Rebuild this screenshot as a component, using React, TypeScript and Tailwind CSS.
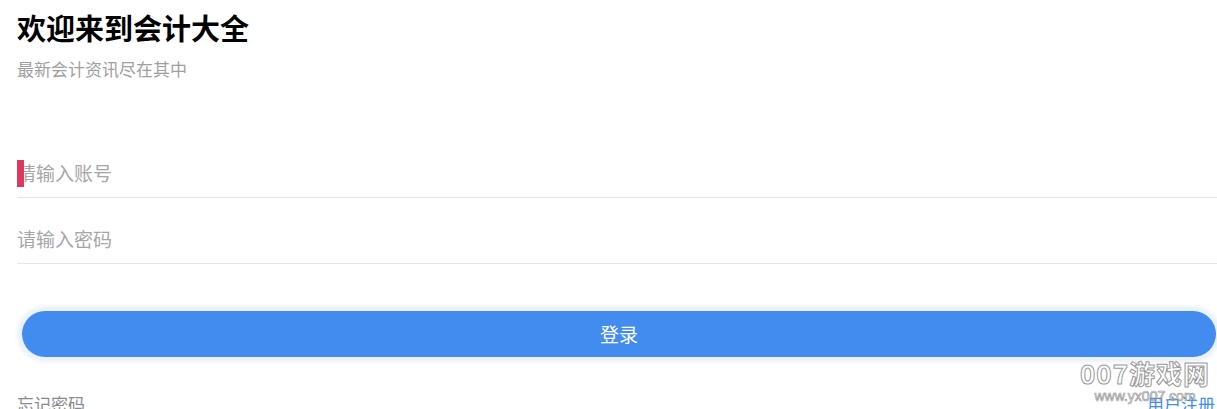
const cjk = "font-['Noto_Sans_CJK_SC','Noto_Sans',sans-serif]";

function Field({ placeholder, caret }: { placeholder: string; caret?: boolean }) {
  return (
    <div className="relative flex h-[66px] items-center border-b border-[#e6e6e6]">
      {caret && <span className="absolute left-0 top-[28px] h-[27px] w-[7px] bg-[#e0385c]" />}
      <span className="pt-[18px] text-[19px] text-[#a6a6a6]">{placeholder}</span>
    </div>
  );
}

export default function App() {
  return (
    <div className={`relative h-[409px] w-full overflow-hidden bg-white pl-[17px] ${cjk}`}>
      <h1 className="pt-[6px] text-[29px] font-bold leading-[42px] text-black">欢迎来到会计大全</h1>
      <p className="mt-[9px] text-[17px] leading-[24px] text-[#a0a0a0]">最新会计资讯尽在其中</p>

      <div className="mt-[51px]">
        <Field placeholder="请输入账号" caret />
        <Field placeholder="请输入密码" />
      </div>

      <div className="mt-[47px] pl-[5px]">
        <button className="flex h-[46px] w-[1194px] items-center justify-center rounded-full bg-[#428bef] text-[19px] text-white shadow-[0_0_4px_5px_#eaf1fa]">
          登录
        </button>
      </div>

      <div className="mt-[35px] flex items-start justify-between text-[17px] leading-[24px]">
        <span className="text-[#8a8a8a]">忘记密码</span>
        <span className="pr-[2px] text-[#428bef]">用户注册</span>
      </div>

      <div className="pointer-events-none absolute right-[7px] top-[358px] flex flex-col items-center">
        <span className="text-[26px] font-bold leading-[30px] tracking-[1px] text-transparent [-webkit-text-stroke:1px_#9a9a9a]">007游戏网</span>
        <span className="font-['Liberation_Sans',sans-serif] text-[14px] leading-[16px] text-transparent [-webkit-text-stroke:0.7px_#9a9a9a]">www.yx007.com</span>
      </div>
    </div>
  );
}
